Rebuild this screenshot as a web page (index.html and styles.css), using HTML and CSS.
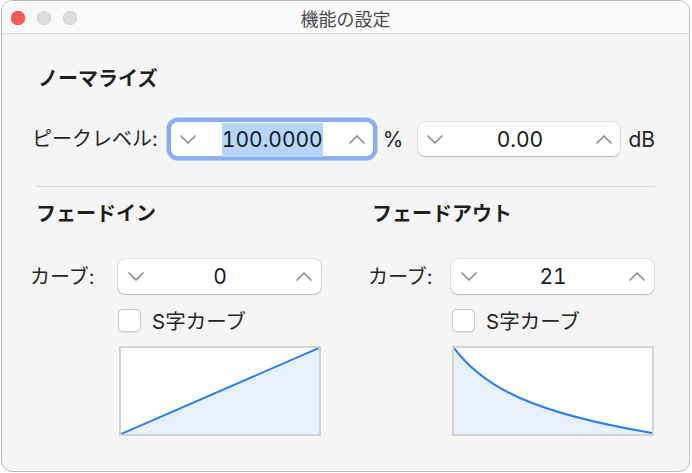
FILE: index.html
```html
<!DOCTYPE html>
<html lang="ja">
<head>
    <meta charset="UTF-8">
    <title>機能の設定</title>
    <link rel="stylesheet" href="styles.css">
</head>
<body>
    <div class="window">
        <div class="titlebar">
            <div class="lights">
                <span class="light close"></span>
                <span class="light"></span>
                <span class="light"></span>
            </div>
            <div class="title">機能の設定</div>
            <div></div>
        </div>

        <div class="content">
            <div class="section-title">ノーマライズ</div>
            <div class="level-row">
                <span class="field-label">ピークレベル:</span>
                <div class="stepper focused">
                    <svg class="chevron" viewBox="0 0 16 9"><polyline points="1,1 8,8 15,1"/></svg>
                    <span class="value"><span class="selected">100.0000</span></span>
                    <svg class="chevron" viewBox="0 0 16 9"><polyline points="1,8 8,1 15,8"/></svg>
                </div>
                <span class="unit percent">%</span>
                <div class="stepper">
                    <svg class="chevron" viewBox="0 0 16 9"><polyline points="1,1 8,8 15,1"/></svg>
                    <span class="value">0.00</span>
                    <svg class="chevron" viewBox="0 0 16 9"><polyline points="1,8 8,1 15,8"/></svg>
                </div>
                <span class="unit db">dB</span>
            </div>

            <div class="divider"></div>

            <div class="fades">
                <div class="fade fade-in">
                    <div class="section-title">フェードイン</div>
                    <span class="field-label">カーブ:</span>
                    <div class="stepper">
                        <svg class="chevron" viewBox="0 0 16 9"><polyline points="1,1 8,8 15,1"/></svg>
                        <span class="value">0</span>
                        <svg class="chevron" viewBox="0 0 16 9"><polyline points="1,8 8,1 15,8"/></svg>
                    </div>
                    <label class="check"><span class="box"></span>S字カーブ</label>
                    <div class="graph">
                        <svg viewBox="0 0 198 86" preserveAspectRatio="none">
                            <polygon class="area" points="0,86 198,0 198,86"/>
                            <line class="curve" x1="0" y1="86" x2="198" y2="0"/>
                        </svg>
                    </div>
                </div>

                <div class="fade fade-out">
                    <div class="section-title">フェードアウト</div>
                    <span class="field-label">カーブ:</span>
                    <div class="stepper">
                        <svg class="chevron" viewBox="0 0 16 9"><polyline points="1,1 8,8 15,1"/></svg>
                        <span class="value">21</span>
                        <svg class="chevron" viewBox="0 0 16 9"><polyline points="1,8 8,1 15,8"/></svg>
                    </div>
                    <label class="check"><span class="box"></span>S字カーブ</label>
                    <div class="graph">
                        <svg viewBox="0 0 198 86" preserveAspectRatio="none">
                            <path class="area" d="M0,0 C30,40 80,65 198,85 L198,86 L0,86 Z"/>
                            <path class="curve" d="M0,0 C30,40 80,65 198,85"/>
                        </svg>
                    </div>
                </div>
            </div>
        </div>
    </div>
</body>
</html>
```

FILE: styles.css
```css
body {
    margin: 0;
    background: #fff;
    font-family: Inter, "Noto Sans CJK JP", sans-serif;
    color: #242424;
}
.window {
    box-sizing: border-box;
    width: 689px;
    height: 472px;
    margin-left: 1px;
    border: 1px solid #bcbcbc;
    border-radius: 11px;
    background: #f5f5f5;
    overflow: hidden;
}
.titlebar {
    height: 32px;
    border-bottom: 1px solid #dcdcdc;
    background: #f9f9f9;
    display: grid;
    grid-template-columns: 1fr auto 1fr;
    align-items: center;
}
.lights {
    display: flex;
    gap: 12px;
    padding-left: 9px;
    padding-top: 1px;
}
.light {
    width: 14px;
    height: 14px;
    border-radius: 50%;
    background: #dddddd;
    box-shadow: inset 0 0 0 0.5px #c9c9c9;
}
.light.close {
    background: #fe5a53;
    box-shadow: inset 0 0 0 0.5px #e4443d;
}
.title {
    font-size: 18px;
    color: #4a4a4a;
    padding-top: 2px;
}
.content {
    padding: 33px 34px 0;
}
.section-title {
    font-size: 20px;
    line-height: 24px;
    font-weight: bold;
    color: #1e1e1e;
    margin-left: 2px;
    white-space: nowrap;
}
.field-label {
    font-size: 20px;
    line-height: 24px;
    color: #262626;
    white-space: nowrap;
}
.level-row {
    display: flex;
    align-items: center;
    margin-top: 31px;
    margin-left: -4px;
    height: 34px;
}
.level-row .field-label {
    flex: none;
    margin-right: 13px;
}
.stepper {
    box-sizing: border-box;
    flex: none;
    width: 202px;
    height: 34px;
    background: #fff;
    border-radius: 7px;
    box-shadow: 0 0 0 0.5px rgba(0, 0, 0, 0.16), 0 1px 1.5px rgba(0, 0, 0, 0.18);
    display: flex;
    align-items: center;
    padding: 0 8px 0 9px;
}
.stepper.focused {
    box-shadow: 0 0 0 4.5px #89aff2;
}
.chevron {
    width: 16px;
    height: 9px;
    flex: none;
}
.chevron polyline {
    fill: none;
    stroke: #8d8d8d;
    stroke-width: 1.7;
    stroke-linecap: round;
    stroke-linejoin: round;
}
.value {
    flex: 1;
    text-align: center;
    font-size: 21px;
    font-feature-settings: "tnum";
    color: #1a1a1a;
}
.selected {
    background: #b4d5fe;
    padding: 4px 0 5px;
}
.unit {
    flex: none;
    font-size: 21px;
    color: #262626;
}
.percent {
    margin: 0 15px 0 10px;
}
.db {
    margin-left: 8px;
}
.divider {
    height: 1px;
    background: #dedede;
    margin-top: 30px;
}
.fades {
    display: flex;
    gap: 47px;
    margin-top: 15px;
    margin-left: -6px;
}
.fade {
    display: grid;
    grid-template-columns: 88px 203px;
    align-items: center;
}
.fade-out {
    grid-template-columns: 83px 203px;
}
.fade .section-title {
    grid-column: 1 / 3;
    margin-left: 6px;
}
.fade-out .section-title {
    margin-left: 4px;
}
.fade .field-label {
    margin-top: 33px;
}
.fade .stepper {
    width: 203px;
    height: 35px;
    margin-top: 33px;
    padding: 0 9px 0 10px;
}
.check {
    grid-column: 2;
    display: flex;
    align-items: center;
    margin-top: 14px;
    height: 24px;
    font-size: 20.5px;
    color: #262626;
    white-space: nowrap;
}
.box {
    box-sizing: border-box;
    width: 23px;
    height: 23px;
    border-radius: 5px;
    background: #fff;
    border: 1px solid #cdcdcd;
    box-shadow: 0 0.5px 1px rgba(0, 0, 0, 0.08);
    margin-right: 11px;
}
.fade-out .box {
    margin-left: 1px;
}
.graph {
    grid-column: 2;
    box-sizing: border-box;
    width: 202px;
    height: 90px;
    margin-top: 14px;
    margin-left: 1px;
    border: 2px solid #d3d3d3;
    background: #fff;
}
.graph svg {
    display: block;
    width: 198px;
    height: 86px;
}
.area {
    fill: #e7f0fd;
}
.curve {
    fill: none;
    stroke: #2a7ff2;
    stroke-width: 2;
}
```
